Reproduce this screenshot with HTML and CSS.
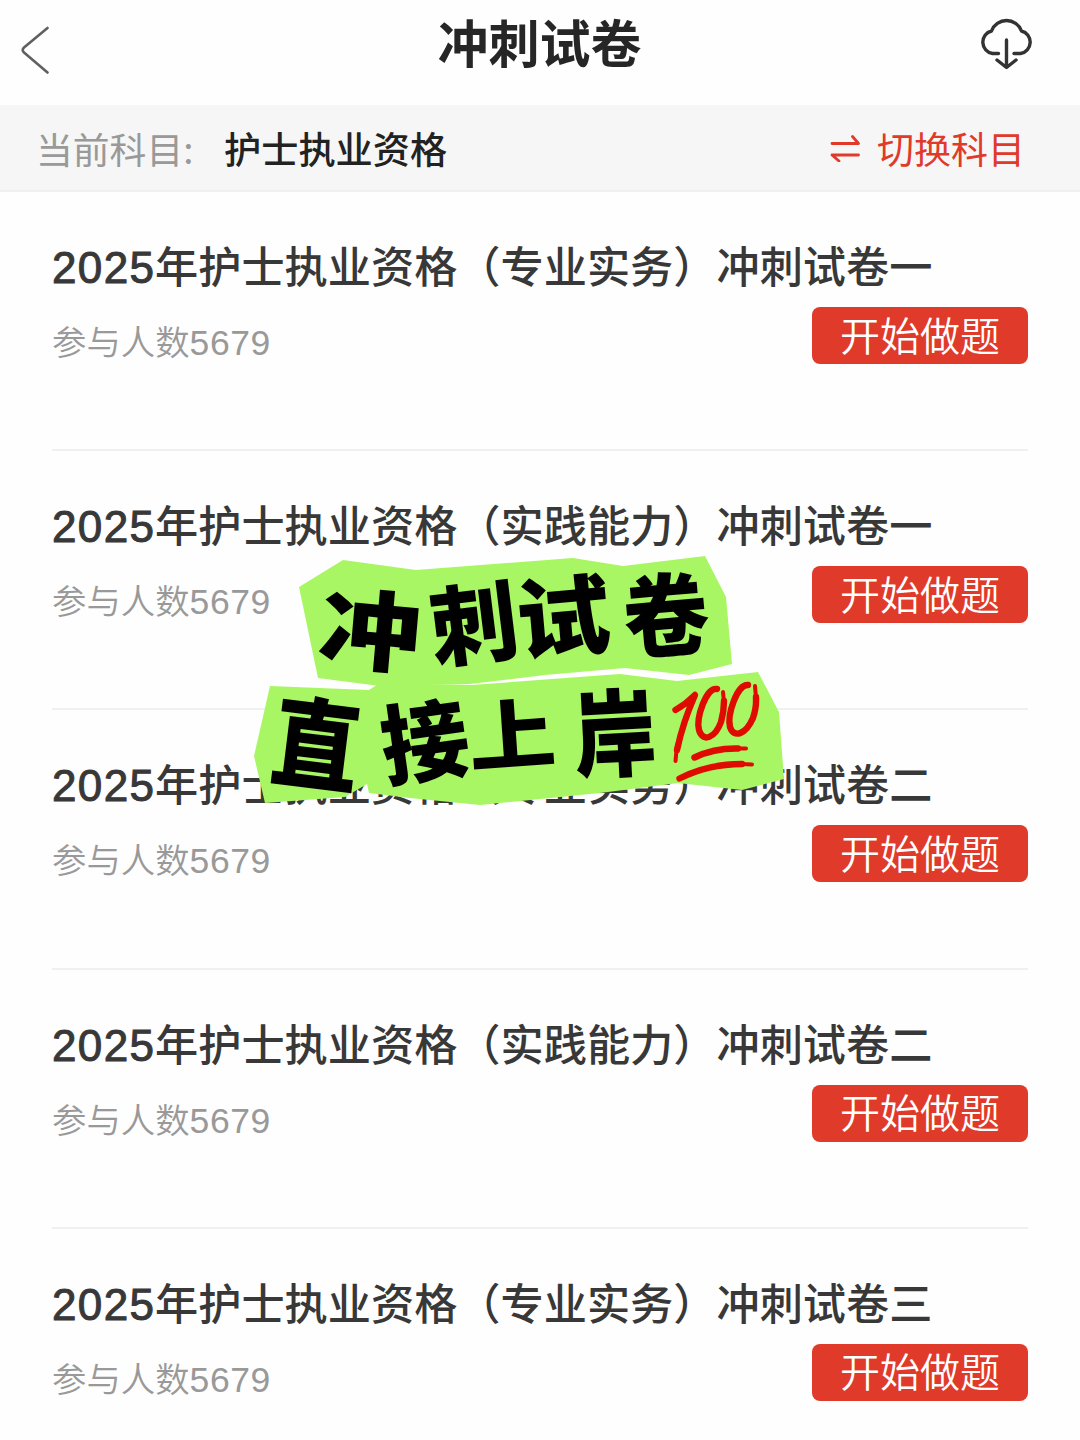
FILE: index.html
```
<!DOCTYPE html>
<html lang="zh-CN">
<head>
    <meta charset="UTF-8">
    <meta name="viewport" content="width=device-width, initial-scale=1.0">
    <title>冲刺试卷</title>
    <link rel="stylesheet" href="styles.css">
</head>
<body>
    <header class="header">
        <svg class="back" viewBox="0 0 30 50">
            <path d="M26.5 3 L3 22.5 Q0.5 25 3 27.5 L26.5 47.5"/>
        </svg>
        <h1>冲刺试卷</h1>
        <svg class="download" viewBox="0 0 54 52">
            <path d="M18.5 35.5 H12.5 A11.5 11.5 0 0 1 11.5 13 A16 16 0 0 1 41.5 13 A11.5 11.5 0 0 1 40.5 35.5 H34"/>
            <path d="M26.5 22 V49 M17 42 L26.5 49.5 L36 42"/>
        </svg>
    </header>
    <div class="subject">
        <span class="label">当前科目:</span>
        <span class="name">护士执业资格</span>
        <a class="switch">
            <svg viewBox="0 0 30 28">
                <path d="M2 9.5 H28.5 L22.5 2.5 M28.5 21 H2 L9 27"/>
            </svg>
            切换科目
        </a>
    </div>
    <main class="list">
        <div class="item">
            <h2><span class="year">2025</span>年护士执业资格（专业实务）冲刺试卷一</h2>
            <div class="row">
                <p>参与人数<span class="num">5679</span></p>
                <button>开始做题</button>
            </div>
        </div>
        <div class="item">
            <h2><span class="year">2025</span>年护士执业资格（实践能力）冲刺试卷一</h2>
            <div class="row">
                <p>参与人数<span class="num">5679</span></p>
                <button>开始做题</button>
            </div>
        </div>
        <div class="item">
            <h2><span class="year">2025</span>年护士执业资格（专业实务）冲刺试卷二</h2>
            <div class="row">
                <p>参与人数<span class="num">5679</span></p>
                <button>开始做题</button>
            </div>
        </div>
        <div class="item">
            <h2><span class="year">2025</span>年护士执业资格（实践能力）冲刺试卷二</h2>
            <div class="row">
                <p>参与人数<span class="num">5679</span></p>
                <button>开始做题</button>
            </div>
        </div>
        <div class="item">
            <h2><span class="year">2025</span>年护士执业资格（专业实务）冲刺试卷三</h2>
            <div class="row">
                <p>参与人数<span class="num">5679</span></p>
                <button>开始做题</button>
            </div>
        </div>
    </main>

    <!-- paper cut sticker over the list -->
    <svg class="sticker" viewBox="230 520 580 320">
        <g class="paper">
            <polygon points="299,587 343,560 416,570 573,558 623,566 705,556 726,597 732,664 689,675 625,668 545,675 470,684 380,686 318,678"/>
            <polygon points="270,686 369,690 380,683 472,685 620,674 677,681 758,672 779,712 784,779 742,790 678,783 600,793 480,805 410,798 369,793 367,784 345,797 265,803 254,756"/>
        </g>
        <g class="words">
            <text transform="translate(370 632) rotate(5) scale(1.03 .87)" y="36">冲</text>
            <text transform="translate(474 625) rotate(-7) scale(.88 .88)" y="36">刺</text>
            <text transform="translate(563 618) rotate(-5) scale(.94 .88)" y="36">试</text>
            <text transform="translate(666 617) rotate(-5) scale(.86 .9)" y="36">卷</text>
            <text transform="translate(316 746) rotate(7) scale(.88 .99)" y="36">直</text>
            <text transform="translate(425 743) rotate(-8) scale(.88 .88)" y="36">接</text>
            <text transform="translate(512 736) rotate(-4) scale(.87 .76)" y="36">上</text>
            <text transform="translate(615 735) rotate(-3) scale(.82 .95)" y="36">岸</text>
        </g>
        <g class="hundred">
            <path class="thick" d="M675.5 710 Q686 704 695 695 Q683 722 677 750"/>
            <path d="M677 745 L675.5 761"/>
            <path class="thick" d="M717 689 C706 687 696 718 699 730 C703 743 715 738 721 722 C724 712 724 706 724 701"/>
            <path d="M724 702 L723 692"/>
            <path class="thick" d="M748 685 C737 684 727 715 730 727 C734 739 746 734 753 718 C757 706 756 702 756 697"/>
            <path d="M756 698 L755 686"/>
            <path class="thick" d="M694.5 757.5 Q714 748 738 748.5 M679.5 778.5 Q708 764 742 764"/>
            <path d="M737 748.5 L746 748.5 M741 764 L752 764.5"/>
        </g>
    </svg>
</body>
</html>
```

FILE: styles.css
```
* {
    box-sizing: border-box;
    margin: 0;
    padding: 0;
}
body {
    position: relative;
    width: 1080px;
    height: 1440px;
    overflow: hidden;
    background-color: #fefefe;
    font-family: "Noto Sans CJK SC", sans-serif;
}
svg {
    display: block;
    fill: none;
    stroke-linecap: round;
    stroke-linejoin: round;
}
.header {
    height: 105px;
    padding: 0 46px 0 21px;
    display: flex;
    justify-content: space-between;
    align-items: flex-start;
}
.header h1 {
    font-size: 51px;
    font-weight: 700;
    line-height: 82px;
    color: #262626;
    margin-left: 48px;
}
.back {
    width: 30px;
    height: 50px;
    margin-top: 25px;
    stroke: #606060;
    stroke-width: 2.6;
}
.download {
    width: 54px;
    height: 52px;
    margin-top: 18px;
    stroke: #333;
    stroke-width: 3.4;
}
.subject {
    height: 87px;
    padding: 0 55px 0 36px;
    display: flex;
    align-items: center;
    background-color: #f6f6f6;
    border-bottom: 2px solid #f0f0f0;
    font-size: 37px;
    line-height: 86px;
}
.label {
    color: #999;
    font-size: 36.8px;
    width: 188px;
}
.name {
    color: #222;
    font-size: 37.2px;
    font-weight: 500;
}
.switch {
    margin-left: auto;
    display: flex;
    align-items: center;
    gap: 17px;
    color: #df3a2a;
}
.switch svg {
    width: 30px;
    height: 28px;
    stroke: #df3a2a;
    stroke-width: 2.8;
}
.list {
    padding: 0 52px;
}
.item {
    height: 259.2px;
    padding-top: 40px;
    border-bottom: 2px solid #f0f0f0;
}
.item h2 {
    height: 64px;
    font-size: 43.2px;
    font-weight: 500;
    line-height: 64px;
    color: #383838;
    white-space: nowrap;
}
.year {
    display: inline-block;
    width: 103px;
    font-family: "Liberation Sans", sans-serif;
    font-size: 44px;
    font-weight: 400;
    letter-spacing: 1.4px;
    -webkit-text-stroke: 1px #383838;
}
.row {
    display: flex;
    justify-content: space-between;
    align-items: flex-start;
    padding-top: 11px;
}
.row p {
    font-size: 34.4px;
    font-weight: 350;
    line-height: 50px;
    color: #999;
    margin-top: 8px;
}
.num {
    font-family: "Liberation Sans", sans-serif;
    font-size: 35.5px;
    letter-spacing: 0.6px;
}
.row button {
    width: 216px;
    height: 57px;
    border: none;
    border-radius: 8px;
    background-color: #df3a2a;
    color: #fff;
    font-family: inherit;
    font-size: 40px;
    font-weight: 350;
    line-height: 50px;
    padding-bottom: 4px;
}
.sticker {
    position: absolute;
    left: 230px;
    top: 520px;
    width: 580px;
    height: 320px;
}
.paper {
    fill: #a9f665;
}
.words {
    fill: #000;
    font-size: 100px;
    font-weight: 900;
    text-anchor: middle;
}
.hundred {
    stroke: #e00b00;
    stroke-width: 4;
}
.hundred .thick {
    stroke-width: 6.4;
}
```
